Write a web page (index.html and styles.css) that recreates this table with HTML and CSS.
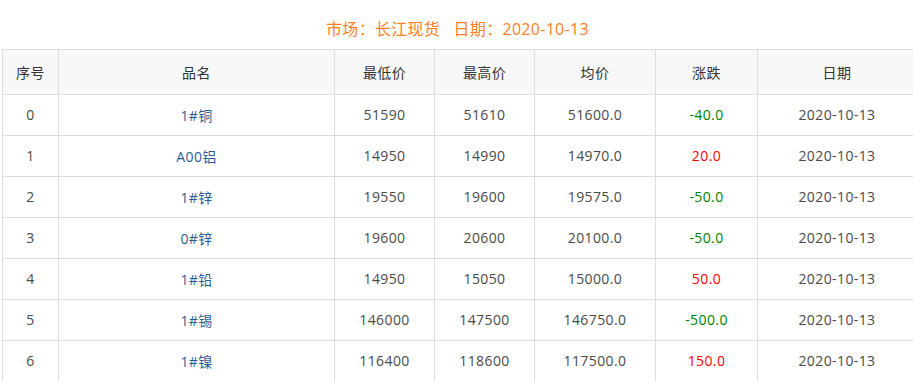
FILE: index.html
```html
<!DOCTYPE html>
<html lang="zh">
<head>
<meta charset="utf-8">
<link rel="stylesheet" href="styles.css">
</head>
<body>
<div class="title">市场：长江现货&nbsp;&nbsp;&nbsp;日期：2020-10-13</div>
<table class="grid">
  <colgroup>
    <col class="c1"><col class="c2"><col class="c3"><col class="c4"><col class="c5"><col class="c6"><col class="c7">
  </colgroup>
  <thead>
    <tr><th>序号</th><th>品名</th><th>最低价</th><th>最高价</th><th>均价</th><th>涨跌</th><th>日期</th></tr>
  </thead>
  <tbody>
    <tr><td>0</td><td class="name">1#铜</td><td>51590</td><td>51610</td><td>51600.0</td><td class="down">-40.0</td><td>2020-10-13</td></tr>
    <tr><td>1</td><td class="name">A00铝</td><td>14950</td><td>14990</td><td>14970.0</td><td class="up">20.0</td><td>2020-10-13</td></tr>
    <tr><td>2</td><td class="name">1#锌</td><td>19550</td><td>19600</td><td>19575.0</td><td class="down">-50.0</td><td>2020-10-13</td></tr>
    <tr><td>3</td><td class="name">0#锌</td><td>19600</td><td>20600</td><td>20100.0</td><td class="down">-50.0</td><td>2020-10-13</td></tr>
    <tr><td>4</td><td class="name">1#铅</td><td>14950</td><td>15050</td><td>15000.0</td><td class="up">50.0</td><td>2020-10-13</td></tr>
    <tr><td>5</td><td class="name">1#锡</td><td>146000</td><td>147500</td><td>146750.0</td><td class="down">-500.0</td><td>2020-10-13</td></tr>
    <tr><td>6</td><td class="name">1#镍</td><td>116400</td><td>118600</td><td>117500.0</td><td class="up">150.0</td><td>2020-10-13</td></tr>
  </tbody>
</table>
</body>
</html>
```
FILE: styles.css
```css
html, body {
  margin: 0;
  padding: 0;
  background: #fff;
}
body {
  font-family: "Open Sans", "Noto Sans CJK SC", sans-serif;
  font-size: 14px;
  color: #4a4a4a;
  overflow: hidden;
}
.title {
  height: 49px;
  line-height: 58px;
  text-align: center;
  font-size: 16px;
  letter-spacing: 0.3px;
  color: #ff7f24;
  box-sizing: border-box;
  padding-left: 2px;
}
.grid {
  margin-left: 2px;
  width: 914px;
  border-collapse: collapse;
  table-layout: fixed;
}
.c1 { width: 56px; }
.c2 { width: 276px; }
.c3 { width: 100px; }
.c4 { width: 100px; }
.c5 { width: 121px; }
.c6 { width: 102px; }
.c7 { width: 159px; }
.grid th, .grid td {
  border: 1px solid #ddd;
  text-align: center;
  padding: 0 0 1px;
  font-weight: normal;
  letter-spacing: 0.4px;
}
.grid th {
  height: 43px;
  background: #f8f8f8;
  color: #333;
}
.grid td {
  height: 39px;
}
.grid td.name { color: #2a5d95; }
.grid td.down { color: #008000; }
.grid td.up { color: #ff0000; }
```
